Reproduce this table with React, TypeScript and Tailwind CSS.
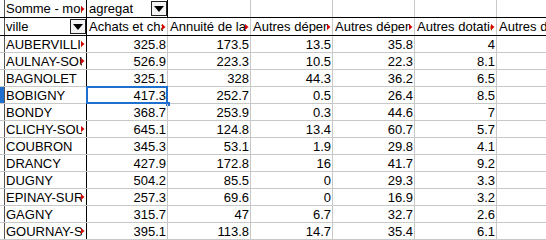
import React from 'react'

// Pivot table ("Somme - montant") as shown in a spreadsheet view
const columns = ['Achats et charges', 'Annuité de la dette', 'Autres dépenses', 'Autres dépenses', 'Autres dotations', 'Autres dépenses']
const widths = ['w-[81px]', 'w-[83px]', 'w-[82px]', 'w-[82px]', 'w-[82px]', 'w-[82px]']

const rows: { ville: string; values: (number | string)[] }[] = [
  { ville: 'AUBERVILLIERS', values: [325.8, 173.5, 13.5, 35.8, 4, 12.4] },
  { ville: 'AULNAY-SOUS-BOIS', values: [526.9, 223.3, 10.5, 22.3, 8.1, 9.6] },
  { ville: 'BAGNOLET', values: [325.1, 328, 44.3, 36.2, 6.5, 3.1] },
  { ville: 'BOBIGNY', values: [417.3, 252.7, 0.5, 26.4, 8.5, 5.2] },
  { ville: 'BONDY', values: [368.7, 253.9, 0.3, 44.6, 7, 2.8] },
  { ville: 'CLICHY-SOUS-BOIS', values: [645.1, 124.8, 13.4, 60.7, 5.7, 4.4] },
  { ville: 'COUBRON', values: [345.3, 53.1, 1.9, 29.8, 4.1, 1.5] },
  { ville: 'DRANCY', values: [427.9, 172.8, 16, 41.7, 9.2, 6.3] },
  { ville: 'DUGNY', values: [504.2, 85.5, 0, 29.3, 3.3, 2.2] },
  { ville: 'EPINAY-SUR-SEINE', values: [257.3, 69.6, 0, 16.9, 3.2, 7.7] },
  { ville: 'GAGNY', values: [315.7, 47, 6.7, 32.7, 2.6, 3.9] },
  { ville: 'GOURNAY-SUR-MARNE', values: [395.1, 113.8, 14.7, 35.4, 6.1, 1.8] },
]

function Overflow() {
  return (
    <svg width="4" height="7" viewBox="0 0 4 7" className="absolute right-[1px] top-1/2 -translate-y-1/2">
      <path d="M0 0.5 L3.5 3.5 L0 6.5 Z" fill="#d40000" />
    </svg>
  )
}

function Dropdown() {
  return (
    <div className="w-[16px] h-[15px] shrink-0 bg-[#f4f4f4] border border-[#222] flex items-center justify-center">
      <svg width="10" height="6" viewBox="0 0 10 6">
        <path d="M0 0 H10 L5 6 Z" fill="#000" />
      </svg>
    </div>
  )
}

function TextCell({ text, className, clipped }: { text: string; className: string; clipped?: boolean }) {
  return (
    <div className={`relative h-full shrink-0 overflow-hidden pl-[1px] flex items-center ${className}`}>
      <span className={`whitespace-nowrap overflow-hidden ${clipped ? 'mr-[4px]' : ''}`}>{text}</span>
      {clipped && <Overflow />}
    </div>
  )
}

export default function App() {
  return (
    <div className="w-[546px] h-[240px] overflow-hidden bg-white text-black text-[13px] leading-none font-['Liberation_Sans',Arial,sans-serif]">
      {/* column field row */}
      <div className="flex h-[18px] border-b border-black">
        <div className="w-[5px] shrink-0 border-r border-[#555]" />
        <TextCell text="Somme - montant" clipped className="w-[82px] border-r border-black" />
        <div className="w-[81px] shrink-0 h-full flex items-center justify-between pl-[2px] border-r border-black">
          <span>agregat</span>
          <Dropdown />
        </div>
        {widths.slice(1).map((w, i) => (
          <div key={i} className={`${w} shrink-0 h-full border-r border-[#c8c8c8]`} />
        ))}
      </div>

      {/* data field headers */}
      <div className="flex h-[18px] border-b border-black">
        <div className="w-[5px] shrink-0 border-r border-[#555]" />
        <div className="w-[82px] shrink-0 h-full flex items-center justify-between pl-[1px] border-r border-black">
          <span>ville</span>
          <Dropdown />
        </div>
        {columns.map((c, i) => (
          <TextCell key={i} text={c} clipped={i < 5} className={`${widths[i]} border-r border-[#c8c8c8] pl-[2px]`} />
        ))}
      </div>

      {rows.map((r, ri) => {
        const selected = r.ville === 'BOBIGNY'
        return (
          <div key={ri} className="flex h-[17px] border-b border-[#c8c8c8]">
            <div className={`w-[5px] shrink-0 border-r border-[#555] ${selected ? 'bg-[#1f6fcf]' : ''}`} />
            <TextCell text={r.ville} clipped={r.ville.length > 10} className="w-[82px] border-r border-black" />
            {r.values.map((v, ci) => (
              <div
                key={ci}
                className={`relative ${widths[ci]} shrink-0 h-full flex items-center justify-end pr-[1px] border-r border-[#c8c8c8]`}
              >
                {v}
                {selected && ci === 0 && (
                  <>
                    <div className="absolute -left-[1px] -top-[1px] -right-[1px] -bottom-[1px] border-2 border-[#1f6fcf]" />
                    <div className="absolute -right-[3px] -bottom-[3px] w-[4px] h-[4px] bg-[#1f6fcf]" />
                  </>
                )}
              </div>
            ))}
          </div>
        )
      })}
    </div>
  )
}
